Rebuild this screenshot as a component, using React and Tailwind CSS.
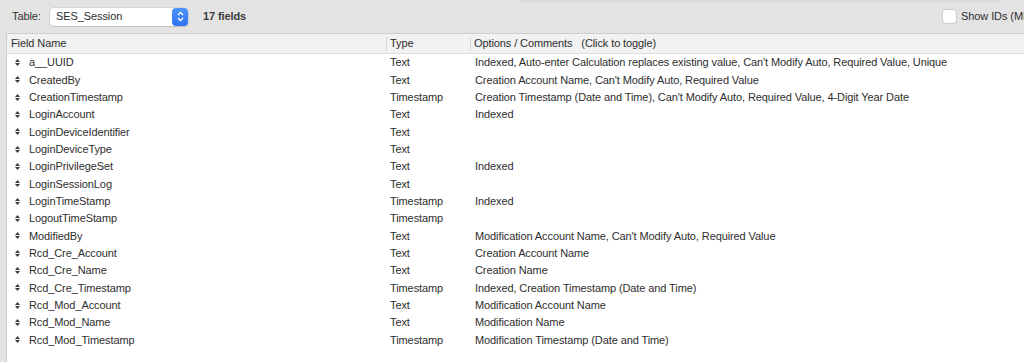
import React from "react";

const rows = [
  ["a__UUID", "Text", "Indexed, Auto-enter Calculation replaces existing value, Can't Modify Auto, Required Value, Unique"],
  ["CreatedBy", "Text", "Creation Account Name, Can't Modify Auto, Required Value"],
  ["CreationTimestamp", "Timestamp", "Creation Timestamp (Date and Time), Can't Modify Auto, Required Value, 4-Digit Year Date"],
  ["LoginAccount", "Text", "Indexed"],
  ["LoginDeviceIdentifier", "Text", ""],
  ["LoginDeviceType", "Text", ""],
  ["LoginPrivilegeSet", "Text", "Indexed"],
  ["LoginSessionLog", "Text", ""],
  ["LoginTimeStamp", "Timestamp", "Indexed"],
  ["LogoutTimeStamp", "Timestamp", ""],
  ["ModifiedBy", "Text", "Modification Account Name, Can't Modify Auto, Required Value"],
  ["Rcd_Cre_Account", "Text", "Creation Account Name"],
  ["Rcd_Cre_Name", "Text", "Creation Name"],
  ["Rcd_Cre_Timestamp", "Timestamp", "Indexed, Creation Timestamp (Date and Time)"],
  ["Rcd_Mod_Account", "Text", "Modification Account Name"],
  ["Rcd_Mod_Name", "Text", "Modification Name"],
  ["Rcd_Mod_Timestamp", "Timestamp", "Modification Timestamp (Date and Time)"],
];

function Handle() {
  return (
    <svg width="5" height="7" viewBox="0 0 5 7" className="shrink-0">
      <path d="M2.5 0 L5 3 L0 3 Z" fill="#3a3a3a" />
      <path d="M0 4 L5 4 L2.5 7 Z" fill="#3a3a3a" />
    </svg>
  );
}

export default function App() {
  return (
    <div
      className="w-[1024px] h-[362px] overflow-hidden bg-[#e3e3e3] text-[11px] tracking-[-0.1px] text-[#2e2e2e]"
      style={{ fontFamily: "'Liberation Sans', Arial, sans-serif" }}
    >
      <div className="h-[33px] flex items-center relative">
        <div className="absolute top-0 left-[520px] w-[480px] h-[2px] bg-[#dadada]" />
        <span className="ml-[12px] w-[38px] text-[#333]">Table:</span>
        <div className="w-[138px] h-[18px] bg-white rounded-[4px] shadow-[0_0_0_0.5px_rgba(0,0,0,0.12),0_1px_1px_rgba(0,0,0,0.1)] flex items-center justify-between">
          <span className="pl-[6px]">SES_Session</span>
          <div className="w-[16px] h-[18px] rounded-[4px] bg-gradient-to-b from-[#4f93fb] to-[#2f72ef] flex items-center justify-center">
            <svg width="7" height="11" viewBox="0 0 7 11">
              <path d="M1 4 L3.5 1.5 L6 4" stroke="white" strokeWidth="1.3" fill="none" />
              <path d="M1 7 L3.5 9.5 L6 7" stroke="white" strokeWidth="1.3" fill="none" />
            </svg>
          </div>
        </div>
        <span className="ml-[15px] font-bold text-[#3a3a3a]">17 fields</span>
        <div className="ml-auto flex items-center">
          <div className="w-[13px] h-[13px] bg-white rounded-[3px] shadow-[0_0_0_0.5px_rgba(0,0,0,0.2)]" />
          <span className="ml-[5px] whitespace-nowrap mr-[-17px]">Show IDs (MBS)</span>
        </div>
      </div>
      <div className="ml-[6px] bg-white h-[329px] border-l border-t border-[#cfcfcf]">
        <div className="h-[20px] bg-[#f2f2f2] border-b border-[#dcdcdc] flex items-center">
          <div className="w-[380px] pl-[4px] border-r border-[#d6d6d6] h-[14px] flex items-center">Field Name</div>
          <div className="w-[84px] pl-[3px] border-r border-[#d6d6d6] h-[14px] flex items-center">Type</div>
          <div className="pl-[3px] whitespace-pre">Options / Comments   (Click to toggle)</div>
        </div>
        {rows.map(([n, t, o]) => (
          <div key={n} className="h-[17.33px] flex items-center whitespace-nowrap">
            <div className="w-[380px] flex items-center pl-[8px]">
              <Handle />
              <span className="ml-[9px]">{n}</span>
            </div>
            <div className="w-[85px] pl-[3px]">{t}</div>
            <div className="pl-[3px]">{o}</div>
          </div>
        ))}
      </div>
    </div>
  );
}
